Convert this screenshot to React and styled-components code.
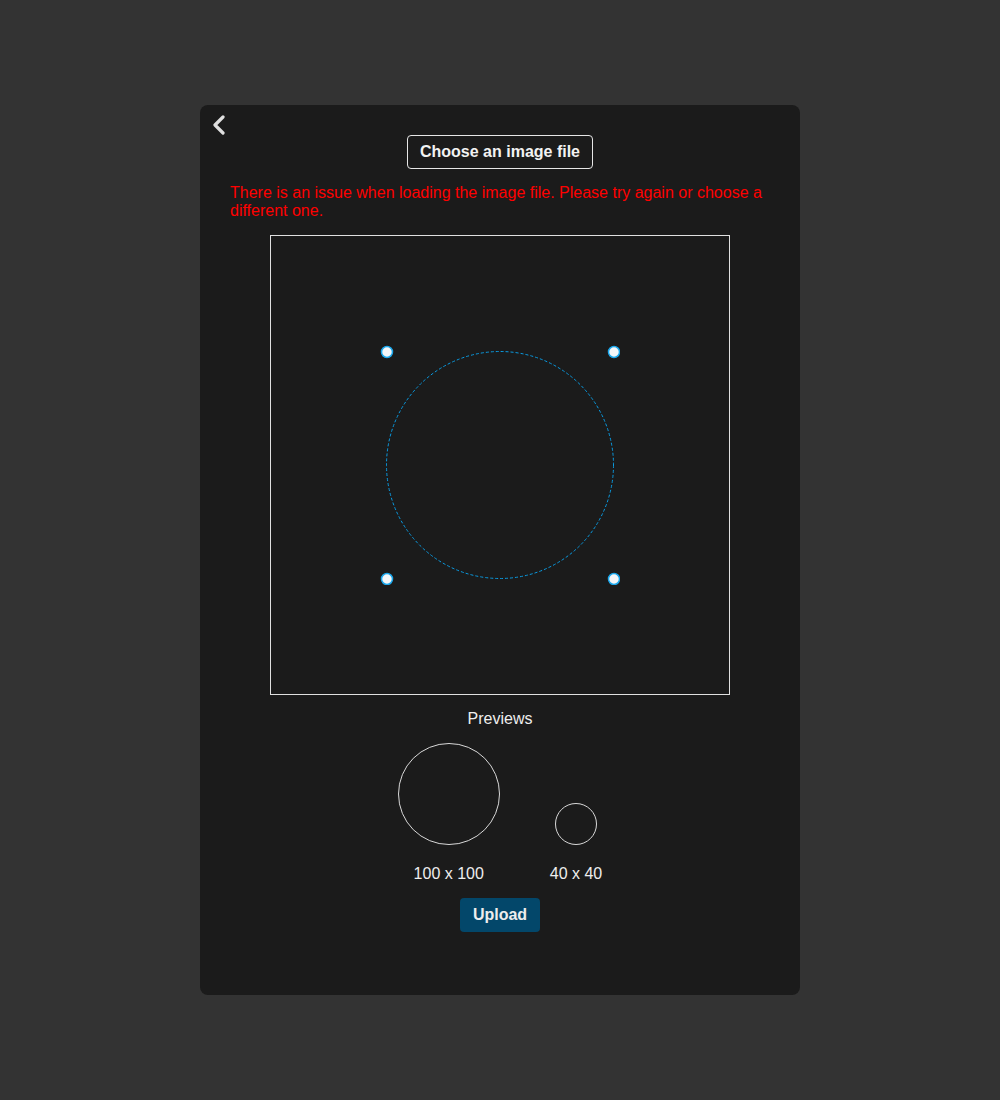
import React from 'react'
import styled, { createGlobalStyle } from 'styled-components'

const GlobalStyle = createGlobalStyle`
  body {
    margin: 0;
    background: #333333;
    font-family: "Liberation Sans", Arial, sans-serif;
  }
`

const App = () => {
  return (
    <>
      <GlobalStyle />
      <Page>
        <Panel>
          <BackButton aria-label="Back">
            <svg width="14" height="20" viewBox="0 0 14 20">
              <path d="M11 2 L3 10 L11 18" fill="none" stroke="#e0e0e0" strokeWidth="3.2" strokeLinecap="round" strokeLinejoin="round" />
            </svg>
          </BackButton>
          <ChooseRow>
            <ChooseButton>Choose an image file</ChooseButton>
          </ChooseRow>
          <ErrorText>
            There is an issue when loading the image file. Please try again or choose a different one.
          </ErrorText>
          <CropBox>
            <Selection>
              <svg width="240" height="240" viewBox="-6 -6 240 240">
                <circle cx="114" cy="114" r="113.5" fill="none" stroke="#0a9ae0" strokeWidth="1" strokeDasharray="3 2" />
                {[[1, 1], [228, 1], [1, 228], [228, 228]].map(([x, y]) => (
                  <circle key={`${x}-${y}`} cx={x} cy={y} r="5.5" fill="#f4f6f8" stroke="#1aa7ec" strokeWidth="1.5" />
                ))}
              </svg>
            </Selection>
          </CropBox>
          <PreviewTitle>Previews</PreviewTitle>
          <PreviewRow>
            <PreviewItem>
              <PreviewCircle size={102} />
              <PreviewLabel>100 x 100</PreviewLabel>
            </PreviewItem>
            <PreviewItem>
              <PreviewCircle size={42} />
              <PreviewLabel>40 x 40</PreviewLabel>
            </PreviewItem>
          </PreviewRow>
          <UploadRow>
            <UploadButton>Upload</UploadButton>
          </UploadRow>
        </Panel>
      </Page>
    </>
  )
}

export default App

const Page = styled.div`
display: flex;
justify-content: center;
padding-top: 105px;
min-height: 1100px;
box-sizing: border-box;
`

const Panel = styled.div`
width: 600px;
height: 890px;
box-sizing: border-box;
background: #1b1b1b;
border-radius: 8px;
padding: 10px 30px 0;
display: flex;
flex-direction: column;
`

const BackButton = styled.button`
align-self: flex-start;
background: none;
border: none;
padding: 0;
margin-left: -18px;
height: 20px;
display: flex;
cursor: pointer;
`

const ChooseRow = styled.div`
display: flex;
justify-content: center;
`

const ChooseButton = styled.button`
background: #1b1b1b;
color: #f2f2f2;
border: 1px solid #e6e6e6;
border-radius: 4px;
font-family: "Liberation Sans", Arial, sans-serif;
font-weight: bold;
font-size: 16px;
height: 34px;
padding: 0 12px;
cursor: pointer;
`

const ErrorText = styled.p`
margin: 15px 0 0;
color: #ff0000;
font-size: 16px;
line-height: 18px;
`

const CropBox = styled.div`
margin: 15px auto 0;
width: 460px;
height: 460px;
box-sizing: border-box;
border: 1px solid #e0e0e0;
display: flex;
align-items: center;
justify-content: center;
`

const Selection = styled.div`
width: 240px;
height: 240px;
display: flex;
`

const PreviewTitle = styled.div`
margin-top: 15px;
text-align: center;
color: #eeeeee;
font-size: 16px;
line-height: 18px;
`

const PreviewRow = styled.div`
margin-top: 15px;
display: flex;
justify-content: center;
gap: 50px;
`

const PreviewItem = styled.div`
display: flex;
flex-direction: column;
align-items: center;
justify-content: flex-end;
`

const PreviewCircle = styled.div`
width: ${p => p.size}px;
height: ${p => p.size}px;
box-sizing: border-box;
border: 1px solid #d8d8d8;
border-radius: 50%;
`

const PreviewLabel = styled.div`
margin-top: 20px;
color: #eeeeee;
font-size: 16px;
line-height: 18px;
`

const UploadRow = styled.div`
margin-top: 15px;
display: flex;
justify-content: center;
`

const UploadButton = styled.button`
background: #03476a;
color: #ededed;
border: none;
border-radius: 4px;
font-family: "Liberation Sans", Arial, sans-serif;
font-weight: bold;
font-size: 16px;
height: 34px;
padding: 0 13px;
cursor: pointer;
`
